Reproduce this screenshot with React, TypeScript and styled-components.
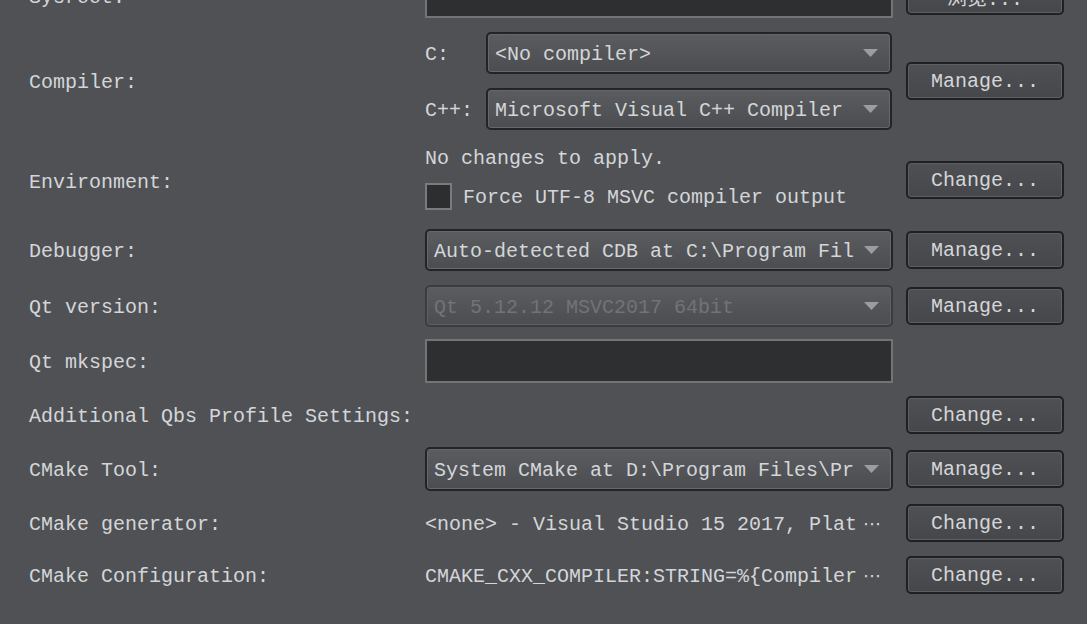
import React from "react";
import styled, { createGlobalStyle } from "styled-components";

const GlobalStyle = createGlobalStyle`
  html, body {
    margin: 0;
    padding: 0;
    width: 1087px;
    height: 624px;
    overflow: hidden;
    background: #505154;
  }
  body {
    font-family: "Liberation Mono", "Noto Sans CJK SC", monospace;
    font-size: 20px;
    color: #d3d6d9;
  }
  * { box-sizing: border-box; }
`;

const Form = styled.div`
  display: flex;
  flex-direction: column;
  padding-left: 29px;
  margin-top: -26px;
`;

const Row = styled.div<{ $h: number; $mt?: number }>`
  display: grid;
  grid-template-columns: 383px 468px 158px;
  column-gap: 13px;
  align-items: center;
  height: ${(p) => p.$h}px;
  margin-top: ${(p) => p.$mt ?? 0}px;
`;

const Label = styled.div<{ $mt?: number }>`
  white-space: nowrap;
  line-height: 24px;
  padding-top: 4px;
  margin-top: ${(p) => p.$mt ?? 0}px;
`;

const LineEdit = styled.div`
  height: 44px;
  border: 2px solid #737474;
  background: #2e2f31;
`;

const Combo = styled.div<{ $h?: number; $disabled?: boolean }>`
  height: ${(p) => p.$h ?? 42}px;
  display: flex;
  align-items: center;
  padding: 0 12px 0 7px;
  border: 2px solid ${(p) => (p.$disabled ? "#3b3c3e" : "#232425")};
  border-radius: 5px;
  background: linear-gradient(#5b5c5f, #4c4d50);
  box-shadow: inset 0 0 0 1px ${(p) => (p.$disabled ? "#5f6063" : "#66676a")};
  color: ${(p) => (p.$disabled ? "#727376" : "inherit")};
  min-width: 0;
`;

const ComboText = styled.div`
  flex: 1;
  min-width: 0;
  overflow: hidden;
  white-space: nowrap;
  line-height: 24px;
  padding-top: 3px;
`;

const ArrowSvg = styled.svg`
  flex: none;
  margin-left: 10px;
  width: 15px;
  height: 8px;
`;

const Arrow = () => (
  <ArrowSvg viewBox="0 0 15 8">
    <polygon points="0,0 15,0 7.5,8" fill="#9c9da0" />
  </ArrowSvg>
);

const Button = styled.div<{ $mt?: number }>`
  width: 158px;
  height: 38px;
  display: flex;
  align-items: center;
  justify-content: center;
  padding-top: 1px;
  border: 2px solid #1f2021;
  border-radius: 5px;
  background: linear-gradient(#4f5053, #46474a);
  box-shadow: inset 0 0 0 1px #5d5e61;
  white-space: nowrap;
  margin-top: ${(p) => p.$mt ?? 0}px;
`;

const CompilerGrid = styled.div`
  display: grid;
  grid-template-columns: 61px 406px;
  grid-template-rows: 42px 42px;
  row-gap: 14px;
  align-items: center;
`;

const EnvBlock = styled.div`
  display: flex;
  flex-direction: column;
`;

const PlainText = styled.div`
  white-space: nowrap;
  line-height: 24px;
  padding-top: 2px;
`;

const CheckRow = styled.div`
  display: flex;
  align-items: center;
  gap: 11px;
  margin-top: 12px;
`;

const CheckBox = styled.div`
  width: 27px;
  height: 27px;
  border: 2px solid #7a7b7c;
  background: #2d2e30;
  flex: none;
`;

const Dots = styled.span`
  font-family: "DejaVu Sans", sans-serif;
  font-size: 18px;
  letter-spacing: -1px;
  margin-left: 6px;
`;

export default function App() {
  return (
    <>
      <GlobalStyle />
      <Form>
        <Row $h={44}>
          <Label>Sysroot:</Label>
          <LineEdit />
          <Button>浏览...</Button>
        </Row>

        <Row $h={98} $mt={14}>
          <Label>Compiler:</Label>
          <CompilerGrid>
            <Label>C:</Label>
            <Combo>
              <ComboText>&lt;No compiler&gt;</ComboText>
              <Arrow />
            </Combo>
            <Label>C++:</Label>
            <Combo>
              <ComboText>Microsoft Visual C++ Compiler</ComboText>
              <Arrow />
            </Combo>
          </CompilerGrid>
          <Button>Manage...</Button>
        </Row>

        <Row $h={65} $mt={15}>
          <Label $mt={6}>Environment:</Label>
          <EnvBlock>
            <PlainText>No changes to apply.</PlainText>
            <CheckRow>
              <CheckBox />
              <PlainText>Force UTF-8 MSVC compiler output</PlainText>
            </CheckRow>
          </EnvBlock>
          <Button $mt={5}>Change...</Button>
        </Row>

        <Row $h={42} $mt={19}>
          <Label>Debugger:</Label>
          <Combo>
            <ComboText>Auto-detected CDB at C:\Program File</ComboText>
            <Arrow />
          </Combo>
          <Button>Manage...</Button>
        </Row>

        <Row $h={42} $mt={14}>
          <Label>Qt version:</Label>
          <Combo $disabled>
            <ComboText>Qt 5.12.12 MSVC2017 64bit</ComboText>
            <Arrow />
          </Combo>
          <Button>Manage...</Button>
        </Row>

        <Row $h={44} $mt={12}>
          <Label>Qt mkspec:</Label>
          <LineEdit />
        </Row>

        <Row $h={38} $mt={13}>
          <Label>Additional Qbs Profile Settings:</Label>
          <div />
          <Button>Change...</Button>
        </Row>

        <Row $h={44} $mt={13}>
          <Label>CMake Tool:</Label>
          <Combo $h={44}>
            <ComboText>System CMake at D:\Program Files\Pr</ComboText>
            <Arrow />
          </Combo>
          <Button>Manage...</Button>
        </Row>

        <Row $h={38} $mt={13}>
          <Label>CMake generator:</Label>
          <PlainText>
            &lt;none&gt; - Visual Studio 15 2017, Plat<Dots>⋯</Dots>
          </PlainText>
          <Button>Change...</Button>
        </Row>

        <Row $h={38} $mt={14}>
          <Label>CMake Configuration:</Label>
          <PlainText>
            CMAKE_CXX_COMPILER:STRING=%{"{"}Compiler<Dots>⋯</Dots>
          </PlainText>
          <Button>Change...</Button>
        </Row>
      </Form>
    </>
  );
}
